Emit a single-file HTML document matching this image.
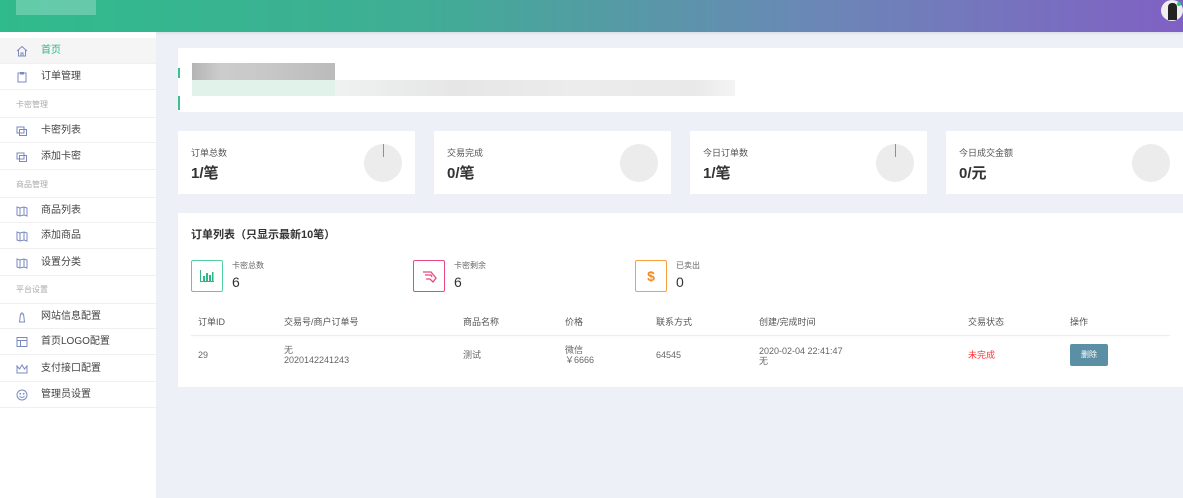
<!DOCTYPE html>
<html><head><meta charset="utf-8"><style>
*{margin:0;padding:0;box-sizing:border-box}
body{width:1183px;height:498px;overflow:hidden;background:#eef0f7;font-family:"Liberation Sans","Noto Sans CJK SC",sans-serif;position:relative;color:#333}
.hdr{position:absolute;left:0;top:0;width:1183px;height:32px;background:linear-gradient(90deg,#30bb8c 0%,#3fae94 35%,#6c86b7 70%,#8060c4 100%);box-shadow:0 1px 3px rgba(0,0,0,.1)}
.side{position:absolute;left:0;top:32px;width:156px;height:466px;background:#fff}
.it{position:absolute;left:0;width:156px;height:26px;font-size:10px;color:#444;padding-left:41px;line-height:26px;border-bottom:1px solid #f0f0f0}
.it svg{position:absolute;left:16px;top:7px}
.sec{position:absolute;left:16px;font-size:8px;color:#aaa}
.card{position:absolute;background:#fff}
.lbl{position:absolute;font-size:9px;color:#555}
.big{position:absolute;font-size:15px;font-weight:bold;color:#333}
.pie{position:absolute;width:38px;height:38px;border-radius:50%;background:#ececec}
.th{position:absolute;top:315px;font-size:9px;color:#555}
.td{position:absolute;font-size:9px;color:#666;line-height:10px}
</style></head><body>
<div class="hdr">
<div style="position:absolute;left:16px;top:0;width:80px;height:15px;background:rgba(255,255,255,.25)"></div>
<div style="position:absolute;left:1161px;top:0;width:22px;height:21px;border-radius:50%;background:#eee;overflow:hidden"><div style="position:absolute;left:7px;top:3px;width:9px;height:17px;background:#222;border-radius:4px 4px 0 0"></div></div>
<div style="position:absolute;left:1177px;top:2px;width:4px;height:4px;border-radius:50%;background:#2c8"></div>
</div>
<div class="side">
<div class="it" style="top:6px;background:#f5f5f5;color:#2fb886">首页<svg width="12" height="12" viewBox="0 0 12 12" fill="none" stroke="#7a8ac0"><path d="M1 6L6 1.5 11 6M2.5 5v6h7V5M5 11V8h2v3"/></svg></div>
<div class="it" style="top:32px">订单管理<svg width="12" height="12" viewBox="0 0 12 12" fill="none" stroke="#7a8ac0"><rect x="2" y="2" width="8" height="9"/><path d="M4.5 1.5h3v1.5h-3z"/></svg></div>
<div class="sec" style="top:67px">卡密管理</div>
<div class="it" style="top:85px;border-top:1px solid #f0f0f0">卡密列表<svg width="12" height="12" viewBox="0 0 12 12" fill="none" stroke="#7a8ac0"><rect x="1" y="2" width="7" height="6"/><rect x="3.5" y="4.5" width="7" height="6"/></svg></div>
<div class="it" style="top:112px">添加卡密<svg width="12" height="12" viewBox="0 0 12 12" fill="none" stroke="#7a8ac0"><rect x="1" y="2" width="7" height="6"/><rect x="3.5" y="4.5" width="7" height="6"/></svg></div>
<div class="sec" style="top:147px">商品管理</div>
<div class="it" style="top:165px;border-top:1px solid #f0f0f0">商品列表<svg width="12" height="12" viewBox="0 0 12 12" fill="none" stroke="#7a8ac0"><path d="M1 2l3 1 4-1 3 1v8l-3-1-4 1-3-1zM4 3v8M8 2v8"/></svg></div>
<div class="it" style="top:191px">添加商品<svg width="12" height="12" viewBox="0 0 12 12" fill="none" stroke="#7a8ac0"><path d="M1 2l3 1 4-1 3 1v8l-3-1-4 1-3-1zM4 3v8M8 2v8"/></svg></div>
<div class="it" style="top:218px">设置分类<svg width="12" height="12" viewBox="0 0 12 12" fill="none" stroke="#7a8ac0"><path d="M1 2l3 1 4-1 3 1v8l-3-1-4 1-3-1zM4 3v8M8 2v8"/></svg></div>
<div class="sec" style="top:252px">平台设置</div>
<div class="it" style="top:271px;border-top:1px solid #f0f0f0">网站信息配置<svg width="12" height="12" viewBox="0 0 12 12" fill="none" stroke="#7a8ac0"><path d="M6 1v2M4.5 3h3l1 8h-5zM3 11h6"/></svg></div>
<div class="it" style="top:297px">首页LOGO配置<svg width="12" height="12" viewBox="0 0 12 12" fill="none" stroke="#7a8ac0"><rect x="1" y="1.5" width="10" height="9"/><path d="M1 4.5h10M4.5 4.5v6"/></svg></div>
<div class="it" style="top:324px">支付接口配置<svg width="12" height="12" viewBox="0 0 12 12" fill="none" stroke="#7a8ac0"><path d="M1 3l2.5 3L6 2l2.5 4L11 3v7H1z"/></svg></div>
<div class="it" style="top:350px">管理员设置<svg width="12" height="12" viewBox="0 0 12 12" fill="none" stroke="#7a8ac0"><circle cx="6" cy="6" r="5"/><path d="M3.5 7c1.5 2 3.5 2 5 0"/><circle cx="4.3" cy="4.8" r=".4"/><circle cx="7.7" cy="4.8" r=".4"/></svg></div>
</div>

<div class="card" style="left:178px;top:48px;width:1005px;height:64px">
<div style="position:absolute;left:0;top:20px;width:2px;height:10px;background:#3cbf8f"></div>
<div style="position:absolute;left:0;top:48px;width:2px;height:14px;background:#3cbf8f"></div>
<div style="position:absolute;left:14px;top:15px;width:143px;height:17px;background:linear-gradient(90deg,#b4b4b4,#ccc 20%,#c8c8c8 50%,#bbb)"></div>
<div style="position:absolute;left:14px;top:32px;width:143px;height:16px;background:#e0f2ea"></div>
<div style="position:absolute;left:157px;top:32px;width:400px;height:16px;background:linear-gradient(90deg,#eef2f0,#e6e6e6 30%,#ececec 60%,#e9e9e9 90%,#f4f4f4)"></div>
</div>

<div class="card" style="left:178px;top:131px;width:237px;height:63px"><div class="lbl" style="left:13px;top:15px">订单总数</div><div class="big" style="left:13px;top:31px">1/笔</div><div class="pie" style="left:186px;top:13px"></div><div style="position:absolute;left:205px;top:13px;width:1px;height:13px;background:#8c84d8"></div></div>
<div class="card" style="left:434px;top:131px;width:237px;height:63px"><div class="lbl" style="left:13px;top:15px">交易完成</div><div class="big" style="left:13px;top:31px">0/笔</div><div class="pie" style="left:186px;top:13px"></div></div>
<div class="card" style="left:690px;top:131px;width:237px;height:63px"><div class="lbl" style="left:13px;top:15px">今日订单数</div><div class="big" style="left:13px;top:31px">1/笔</div><div class="pie" style="left:186px;top:13px"></div><div style="position:absolute;left:205px;top:13px;width:1px;height:13px;background:#e66"></div></div>
<div class="card" style="left:946px;top:131px;width:237px;height:63px"><div class="lbl" style="left:13px;top:15px">今日成交金额</div><div class="big" style="left:13px;top:31px">0/元</div><div class="pie" style="left:186px;top:13px"></div></div>

<div class="card" style="left:178px;top:213px;width:1005px;height:174px"></div>
<div style="position:absolute;left:191px;top:226px;font-size:11px;font-weight:bold;color:#333">订单列表（只显示最新10笔）</div>

<div style="position:absolute;left:191px;top:260px;width:32px;height:32px;border:1px solid #52d0a2;border-radius:2px"><svg width="14" height="12" viewBox="0 0 14 12" style="position:absolute;left:8px;top:9px" fill="#2fb886"><rect x="0" y="0" width="1" height="12"/><rect x="0" y="11" width="14" height="1"/><rect x="3" y="6" width="2" height="5"/><rect x="6" y="3" width="2" height="8"/><rect x="9" y="5" width="2" height="6"/><rect x="12" y="2" width="1.5" height="9"/></svg></div>
<div style="position:absolute;left:232px;top:260px;font-size:8px;color:#666">卡密总数</div><div style="position:absolute;left:232px;top:274px;font-size:14px;color:#333">6</div>
<div style="position:absolute;left:413px;top:260px;width:32px;height:32px;border:1px solid #e8477f;border-radius:2px"><svg width="16" height="14" viewBox="0 0 16 14" style="position:absolute;left:8px;top:9px" fill="none" stroke="#e8477f" stroke-width="1.3"><path d="M1 2h8l5 6-3 4-3-3H4M3 5h6l1 2"/></svg></div>
<div style="position:absolute;left:454px;top:260px;font-size:8px;color:#666">卡密剩余</div><div style="position:absolute;left:454px;top:274px;font-size:14px;color:#333">6</div>
<div style="position:absolute;left:635px;top:260px;width:32px;height:32px;border:1px solid #f8a040;border-radius:2px;color:#f58a1f;font-size:14px;font-weight:bold;text-align:center;line-height:30px">$</div>
<div style="position:absolute;left:676px;top:260px;font-size:8px;color:#666">已卖出</div><div style="position:absolute;left:676px;top:274px;font-size:14px;color:#333">0</div>

<div class="th" style="left:198px">订单ID</div><div class="th" style="left:284px">交易号/商户订单号</div><div class="th" style="left:463px">商品名称</div><div class="th" style="left:565px">价格</div><div class="th" style="left:656px">联系方式</div><div class="th" style="left:759px">创建/完成时间</div><div class="th" style="left:968px">交易状态</div><div class="th" style="left:1070px">操作</div>
<div style="position:absolute;left:191px;top:335px;width:979px;height:1px;background:#eee;box-shadow:0 1px 2px rgba(0,0,0,.04)"></div>
<div class="td" style="left:198px;top:350px">29</div>
<div class="td" style="left:284px;top:345px">无<br>2020142241243</div>
<div class="td" style="left:463px;top:350px">测试</div>
<div class="td" style="left:565px;top:345px">微信<br>￥6666</div>
<div class="td" style="left:656px;top:350px">64545</div>
<div class="td" style="left:759px;top:346px">2020-02-04 22:41:47<br>无</div>
<div class="td" style="left:968px;top:350px;color:#f33">未完成</div>
<div style="position:absolute;left:1070px;top:344px;width:38px;height:22px;background:#5b8fa6;border-radius:2px;color:#fff;font-size:8px;text-align:center;line-height:22px">删除</div>
</body></html>
